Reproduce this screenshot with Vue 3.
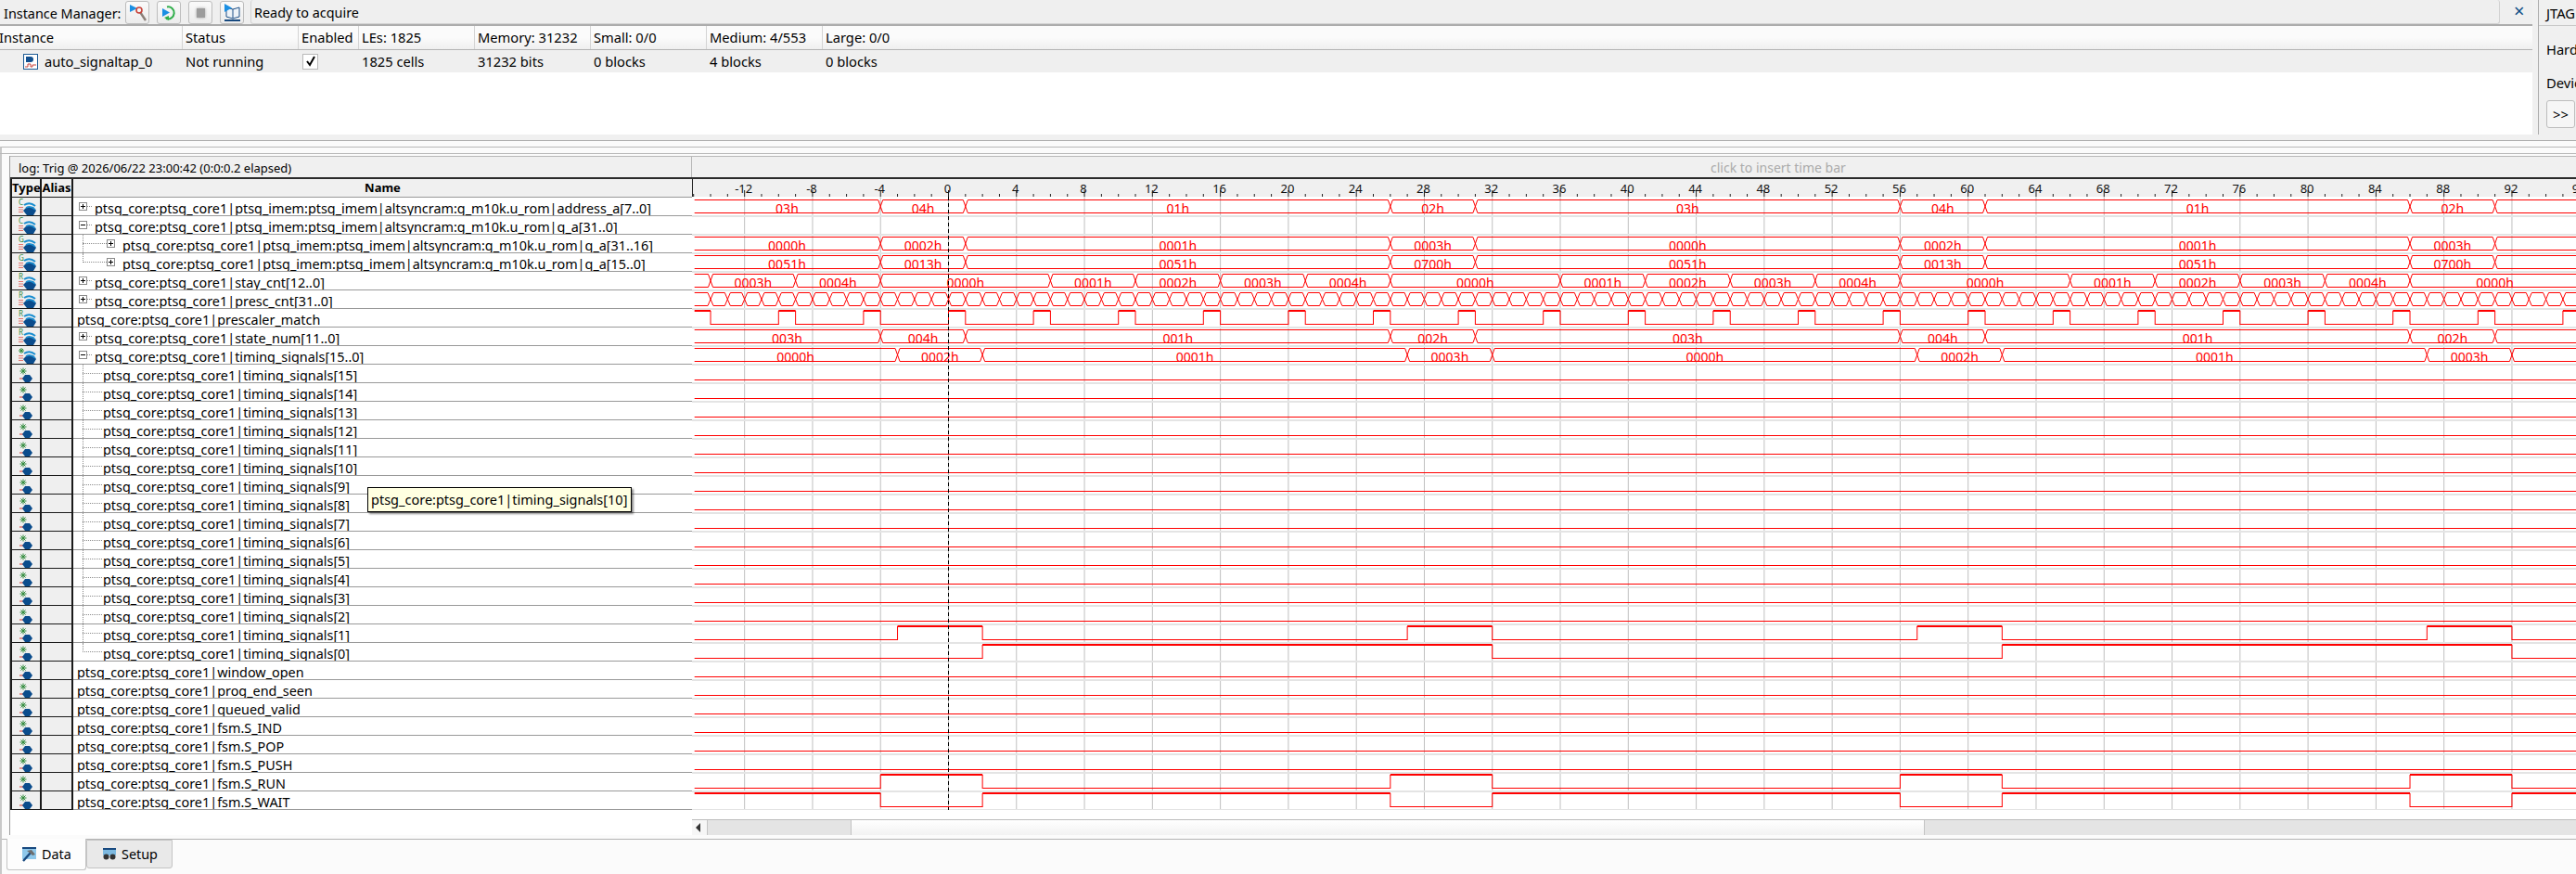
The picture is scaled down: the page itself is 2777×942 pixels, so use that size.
<script setup>
import { computed } from 'vue';

// time axis: 18.32px per unit, t=0 sits at x=276.5 inside the wave svg
const UNIT = 18.32;
const X = t => 276.5 + UNIT * t;
const rowTop = i => 19 + 20 * i;
const T0 = -15;

const P = 'ptsg_core:ptsg_core1|';
const ROM = P + 'ptsg_imem:ptsg_imem|altsyncram:g_m10k.u_rom|';

const busEdges = [-4, 1, 26, 31, 56, 61, 86, 91];
const shiftEdges = [-3, 2, 27, 32, 57, 62, 87, 92];
const stayEdges = [-14, -9, -4, 6, 11, 16, 21, 26, 36, 41, 46, 51, 56, 66, 71, 76, 81, 86, 96];
const stayLabels = ['', '0003h', '0004h', '0000h', '0001h', '0002h', '0003h', '0004h', '0000h', '0001h', '0002h', '0003h', '0004h', '0000h', '0001h', '0002h', '0003h', '0004h', '0000h', ''];

const range = (from, to, step) => {
    const out = [];
    for (let t = from; t <= to; t += step) out.push(t);
    return out;
};
const pulses = range(-15, 110, 5).flatMap(t => [t, t + 1]);

const bus = (edges, labels, cross = 2.5) => ({ kind: 'bus', edges, labels, cross });
const lvl = (init, edges = []) => ({ kind: 'lvl', init, edges });

const signals = [
    { name: ROM + 'address_a[7..0]', cls: 'n-exp', box: '+', icon: 'bus', mark: 'C', wave: bus(busEdges, ['03h', '04h', '01h', '02h', '03h', '04h', '01h', '02h', '03h']) },
    { name: ROM + 'q_a[31..0]', cls: 'n-exp', box: '-', icon: 'bus', mark: 'C' },
    { name: ROM + 'q_a[31..16]', cls: 'n-sub', box: '+', icon: 'bus', mark: 'G', wave: bus(busEdges, ['0000h', '0002h', '0001h', '0003h', '0000h', '0002h', '0001h', '0003h', '0000h']) },
    { name: ROM + 'q_a[15..0]', cls: 'n-sub', box: '+', icon: 'bus', mark: 'G', last: true, wave: bus(busEdges, ['0051h', '0013h', '0051h', '0700h', '0051h', '0013h', '0051h', '0700h', '0051h']) },
    { name: P + 'stay_cnt[12..0]', cls: 'n-exp', box: '+', icon: 'bus', mark: 'R', wave: bus(stayEdges, stayLabels) },
    { name: P + 'presc_cnt[31..0]', cls: 'n-exp', box: '+', icon: 'bus', mark: 'R', wave: bus(range(-14, 112, 1), [], 3) },
    { name: P + 'prescaler_match', cls: 'n-top', icon: 'bus', mark: 'R', wave: lvl(1, pulses.slice(1)) },
    { name: P + 'state_num[11..0]', cls: 'n-exp', box: '+', icon: 'bus', mark: 'R', wave: bus(busEdges, ['003h', '004h', '001h', '002h', '003h', '004h', '001h', '002h', '003h']) },
    { name: P + 'timing_signals[15..0]', cls: 'n-exp', box: '-', icon: 'bus', mark: '*', wave: bus(shiftEdges, ['0000h', '0002h', '0001h', '0003h', '0000h', '0002h', '0001h', '0003h', '0000h']) },
    ...range(2, 15, 1).reverse().map(n => ({ name: P + `timing_signals[${n}]`, cls: 'n-leaf', icon: 'leaf', wave: lvl(0) })),
    { name: P + 'timing_signals[1]', cls: 'n-leaf', icon: 'leaf', wave: lvl(0, [-3, 2, 27, 32, 57, 62, 87, 92]) },
    { name: P + 'timing_signals[0]', cls: 'n-leaf', icon: 'leaf', last: true, wave: lvl(0, [2, 32, 62, 92]) },
    { name: P + 'window_open', cls: 'n-top', icon: 'leaf', wave: lvl(0) },
    { name: P + 'prog_end_seen', cls: 'n-top', icon: 'leaf', wave: lvl(0) },
    { name: P + 'queued_valid', cls: 'n-top', icon: 'leaf', wave: lvl(0) },
    { name: P + 'fsm.S_IND', cls: 'n-top', icon: 'leaf', wave: lvl(0) },
    { name: P + 'fsm.S_POP', cls: 'n-top', icon: 'leaf', wave: lvl(0) },
    { name: P + 'fsm.S_PUSH', cls: 'n-top', icon: 'leaf', wave: lvl(0) },
    { name: P + 'fsm.S_RUN', cls: 'n-top', icon: 'leaf', wave: lvl(0, [-4, 2, 26, 32, 56, 62, 86, 92]) },
    { name: P + 'fsm.S_WAIT', cls: 'n-top', icon: 'leaf', wave: lvl(1, [-4, 2, 26, 32, 56, 62, 86, 92]) },
];

// the guide line on sub rows runs from the parent box down to the last child
const inTree = s => s.cls === 'n-sub' || s.cls === 'n-leaf';

const majors = range(-12, 96, 4);
const minors = range(-15, 96, 1).filter(t => (t + 12) % 4 !== 0);

const busPath = (wave, top) => {
    const hi = top + 3.5;
    const lo = top + 17.5;
    const d = wave.cross;
    const pts = [T0, ...wave.edges, 116];
    let out = '';
    for (let i = 0; i < pts.length - 1; i++) {
        const a = X(pts[i]) + (i === 0 ? 1 : d);
        const b = X(pts[i + 1]) - d;
        out += `M${a} ${hi}H${b}M${a} ${lo}H${b}`;
        if (i < pts.length - 2) out += `M${b} ${hi}L${b + 2 * d} ${lo}M${b} ${lo}L${b + 2 * d} ${hi}`;
    }
    return out;
};

const busLabels = (wave, top) => {
    const pts = [T0, ...wave.edges, 116];
    return wave.labels
        .map((text, i) => ({ text, x: (X(pts[i]) + X(pts[i + 1])) / 2, y: top + 18 }))
        .filter(l => l.text);
};

// low level and the edges are 1px, the high level is drawn 2px
const levelPaths = (wave, top) => {
    const pts = [T0, ...wave.edges, 116];
    let level = wave.init;
    let thin = '';
    let thick = '';
    for (let i = 0; i < pts.length - 1; i++) {
        const a = X(pts[i]) + (i === 0 ? 1 : 0);
        const b = X(pts[i + 1]);
        if (level) thick += `M${a} ${top + 3}H${b}`;
        else thin += `M${a} ${top + 17.5}H${b}`;
        if (i < pts.length - 2) thin += `M${b} ${top + 3}V${top + 18}`;
        level = level ? 0 : 1;
    }
    return { thin, thick };
};

const waves = computed(() =>
    signals.map((s, i) => {
        const top = rowTop(i);
        if (!s.wave) return { top };
        if (s.wave.kind === 'bus') return { top, d: busPath(s.wave, top), labels: busLabels(s.wave, top) };
        return { top, ...levelPaths(s.wave, top) };
    })
);

const columns = [
    { head: 'Instance', cell: 'auto_signaltap_0', cls: 'c-inst' },
    { head: 'Status', cell: 'Not running', cls: 'c-wide' },
    { head: 'Enabled', check: true, cls: 'c-en' },
    { head: 'LEs: 1825', cell: '1825 cells', cls: 'c-wide' },
    { head: 'Memory: 31232', cell: '31232 bits', cls: 'c-wide' },
    { head: 'Small: 0/0', cell: '0 blocks', cls: 'c-wide' },
    { head: 'Medium: 4/553', cell: '4 blocks', cls: 'c-wide' },
    { head: 'Large: 0/0', cell: '0 blocks', cls: 'c-rest' },
];
</script>

<template>
    <div class="page">
        <div class="top">
            <div class="manager">
                <div class="toolbar">
                    <span class="tb-label">Instance Manager:</span>
                    <button class="tb-btn">
                        <svg width="24" height="23" viewBox="0 0 24 23">
                            <path d="M4 3v8l8-4z" fill="#1a8fe3" />
                            <path d="M15 11l6 9" stroke="#8a7f78" stroke-width="2.4" />
                            <circle cx="14" cy="9" r="3" fill="none" stroke="#c8423a" stroke-width="1.6" />
                        </svg>
                    </button>
                    <button class="tb-btn">
                        <svg width="24" height="23" viewBox="0 0 24 23">
                            <path d="M10 5.5A6.5 6.5 0 1 1 9 18" fill="none" stroke="#2fae4a" stroke-width="2" />
                            <path d="M7 17l5-2v5z" fill="#2fae4a" />
                            <path d="M5 7v9l8-4.5z" fill="#1a8fe3" />
                        </svg>
                    </button>
                    <button class="tb-btn"><span class="stop"></span></button>
                    <button class="tb-btn">
                        <svg width="24" height="23" viewBox="0 0 24 23">
                            <path d="M6 6l7 2 7-2v10l-7 2-7-2z" fill="#eef3f8" stroke="#1c4f86" />
                            <path d="M13 8v10" stroke="#1c4f86" />
                            <path d="M4 2v9l8-4.5z" fill="#1a8fe3" />
                            <path d="M4 20h17" stroke="#17497f" stroke-width="2" />
                        </svg>
                    </button>
                    <div class="tb-status">Ready to acquire</div>
                    <span class="tb-close">×</span>
                </div>
                <div class="inst-table">
                    <div class="inst-head">
                        <div v-for="c in columns" :key="c.head" class="inst-col" :class="c.cls">{{ c.head }}</div>
                    </div>
                    <div class="inst-row">
                        <div v-for="c in columns" :key="c.head" class="inst-col" :class="c.cls">
                            <svg v-if="c.cls === 'c-inst'" class="inst-icon" width="16" height="17" viewBox="0 0 16 17">
                                <rect x="0.5" y="0.5" width="15" height="16" fill="#fff" stroke="#1c5a94" />
                                <path d="M3 3h5a3 3 0 0 1 0 6H3z" fill="#12508f" />
                                <path d="M2 14h3v-3h3v3h2v-2h4" fill="none" stroke="#c8423a" />
                            </svg>
                            <span v-if="c.check" class="check">
                                <svg width="12" height="12" viewBox="0 0 12 12"><path d="M2 6l3 4 5-9" fill="none" stroke="#000" stroke-width="2" /></svg>
                            </span>
                            {{ c.cell }}
                        </div>
                    </div>
                </div>
            </div>
            <div class="gutter"></div>
            <div class="jtag">
                <div class="jtag-title">JTAG Chain Configuration</div>
                <div class="jtag-line">Hardware:</div>
                <div class="jtag-line">Device:</div>
                <button class="more">&gt;&gt;</button>
            </div>
        </div>

        <div class="split"></div>

        <div class="data-wrap">
            <div class="strip"></div>
            <div class="panel">
                <div class="log-bar">
                    <div class="log-text">log: Trig @ 2026/06/22 23:00:42 (0:0:0.2 elapsed)</div>
                    <div class="time-bar">click to insert time bar</div>
                </div>
                <div class="wave-body">
                    <div class="sig-table">
                        <div class="sig-head">
                            <div class="h-type">Type</div>
                            <div class="h-alias">Alias</div>
                            <div class="h-name">Name</div>
                        </div>
                        <div v-for="s in signals" :key="s.name" class="sig-row">
                            <div class="cell-type">
                                <svg v-if="s.icon === 'bus'" width="32" height="19" viewBox="0 0 32 19">
                                    <text v-if="s.mark !== '*'" x="9" y="8" class="mark">{{ s.mark }}</text>
                                    <path v-else d="M12 2v6M9 5h6M10 3l4 4M14 3l-4 4" stroke="#2f8a3a" fill="none" />
                                    <path d="M9 10.5h5M9 13h5M9 15.5h5" stroke="#e0564c" stroke-width="0.8" />
                                    <path d="M14 14l4-4h7l3 4-3 5h-7z" fill="#0b4c8c" />
                                    <path d="M15 8q6-4 12 1" stroke="#1b8ed0" stroke-width="2" fill="none" />
                                    <path d="M17 11q5-3 10 2" stroke="#1b8ed0" stroke-width="1.5" fill="none" />
                                </svg>
                                <svg v-else width="32" height="19" viewBox="0 0 32 19">
                                    <path d="M14 3.5v7M10.5 7h7M11.5 4.5l5 5M16.5 4.5l-5 5" stroke="#2f8a3a" fill="none" />
                                    <path d="M10 15h4" stroke="#d8342a" />
                                    <path d="M13 15l3-4h5l3 4-3 4h-5z" fill="#0b4c8c" />
                                </svg>
                            </div>
                            <div class="cell-alias"></div>
                            <div class="cell-name" :class="s.cls">
                                <span v-if="inTree(s)" class="guide-v" :class="{ half: s.last }"></span>
                                <span v-if="inTree(s)" class="guide-h"></span>
                                <span v-if="s.cls === 'n-exp'" class="guide-stub"></span>
                                <span v-if="s.box" class="box">
                                    <svg width="9" height="9" viewBox="0 0 9 9">
                                        <rect x="0.5" y="0.5" width="8" height="8" fill="#fff" stroke="#8a8a8a" />
                                        <path d="M2 4.5h5" stroke="#000" />
                                        <path v-if="s.box === '+'" d="M4.5 2v5" stroke="#000" />
                                    </svg>
                                </span>
                                <span class="name-text">{{ s.name }}</span>
                            </div>
                        </div>
                    </div>

                    <svg class="wave" width="2031" height="680" viewBox="0 0 2031 680">
                        <rect x="0" y="0" width="2031" height="19" fill="#f0f0f0" />
                        <rect x="0" y="19" width="2031" height="661" fill="#fff" />
                        <rect x="0" y="0" width="1" height="19" fill="#222" />
                        <path v-for="t in majors" :key="'g' + t" :d="`M${X(t)} 19V680`" stroke="#c0c0c0" />
                        <rect v-for="(w, i) in waves" :key="'s' + i" x="0" :y="w.top + 20" width="2031" height="2" fill="#e4e4e4" />
                        <path v-for="t in minors" :key="'m' + t" :d="`M${X(t)} 16V19`" stroke="#222" />
                        <path v-for="t in majors" :key="'j' + t" :d="`M${X(t)} 12V19`" stroke="#222" />
                        <text v-for="t in majors" :key="'l' + t" :x="X(t) - 1" y="15" text-anchor="middle" class="tick">{{ t }}</text>
                        <g v-for="(w, i) in waves" :key="'w' + i">
                            <path v-if="w.d" :d="w.d" class="sig" />
                            <path v-if="w.thin" :d="w.thin" class="sig" />
                            <path v-if="w.thick" :d="w.thick" class="sig-high" />
                            <text v-for="l in w.labels" :key="l.x" :x="l.x" :y="l.y" text-anchor="middle" class="val">{{ l.text }}</text>
                        </g>
                        <path :d="`M${X(0)} 19V680`" stroke="#000" stroke-dasharray="4 3" />
                    </svg>
                </div>
                <div class="scroll-row">
                    <div class="scrollbar">
                        <div class="sb-arrow"></div>
                        <div class="sb-groove g1"></div>
                        <div class="sb-thumb"></div>
                        <div class="sb-groove g2"></div>
                    </div>
                </div>
            </div>
            <div class="tabs">
                <div class="tab tab-on">
                    <svg width="17" height="16" viewBox="0 0 17 16">
                        <rect x="1" y="0" width="15" height="13" fill="#8fc8ea" />
                        <rect x="1" y="0" width="15" height="2" fill="#17497f" />
                        <path d="M2 15l8-9" stroke="#17497f" stroke-width="2.4" />
                        <path d="M6 4l5-1 4 5-3 1-2-2z" fill="#6e6e6e" />
                    </svg>
                    Data
                </div>
                <div class="tab tab-off">
                    <svg width="16" height="14" viewBox="0 0 16 14">
                        <rect x="1" y="0" width="14" height="8" fill="#7db9e0" />
                        <rect x="1" y="0" width="14" height="2" fill="#17497f" />
                        <circle cx="4.5" cy="9.5" r="3" fill="#333" />
                        <circle cx="11.5" cy="9.5" r="3" fill="#333" />
                    </svg>
                    Setup
                </div>
            </div>
        </div>

        <div class="tooltip">ptsg_core:ptsg_core1|timing_signals[10]</div>
    </div>
</template>

<style>
html,
body {
    margin: 0;
    background: #fbfbfb;
}
</style>

<style scoped>
.page {
    position: relative;
    width: 2777px;
    height: 942px;
    overflow: hidden;
    background: #fbfbfb;
    color: #000;
    font-family: "Noto Sans", sans-serif;
    font-size: 14.4px;
}

.top {
    display: flex;
    height: 145px;
    background: #f0f0f0;
}

.manager {
    width: 2730px;
    background: #fff;
}

.toolbar {
    display: flex;
    align-items: flex-start;
    height: 28px;
    box-sizing: border-box;
    padding: 1px 0 0 4px;
    background: #efefef;
    border-bottom: 2px solid #acacac;
}

.tb-label {
    width: 131px;
    line-height: 27px;
    height: 27px;
}

.tb-btn {
    display: flex;
    align-items: center;
    justify-content: center;
    width: 26px;
    height: 25px;
    margin-right: 8px;
    padding: 0;
    box-sizing: border-box;
    background: linear-gradient(#fafafa, #ececec);
    border: 1px solid #bdbdbd;
    border-radius: 3px;
}

.stop {
    width: 9px;
    height: 10px;
    background: #9c9c9c;
    box-shadow: 0 0 3px #9c9c9c;
}

.tb-status {
    width: 2425px;
    margin-top: -1px;
    margin-left: -1px;
    height: 26px;
    box-sizing: border-box;
    padding-left: 3px;
    line-height: 27px;
    border: 1px solid #d2d2d2;
    border-top: none;
    border-radius: 3px;
}

.tb-close {
    margin-left: 15px;
    margin-top: -3px;
    font-size: 20px;
    line-height: 27px;
    color: #0c4d86;
}

.inst-table {
    font-size: 14.7px;
}

.inst-head {
    display: flex;
    height: 26px;
    box-sizing: border-box;
    background: linear-gradient(#fbfbfb 50%, #efefef);
    border-bottom: 1px solid #b4b4b4;
}

.inst-head .inst-col {
    line-height: 25px;
    padding-left: 3px;
    box-sizing: border-box;
    border-right: 1px solid #d4d4d4;
}

.inst-head .c-rest {
    border-right: none;
}

.inst-head .c-inst {
    padding-left: 0;
    text-indent: -1px;
}

.inst-row {
    display: flex;
    height: 24px;
    background: #efefef;
}

.inst-row .inst-col {
    display: flex;
    align-items: center;
    gap: 7px;
    box-sizing: border-box;
    padding-left: 3px;
}

.inst-row .c-inst {
    padding-left: 25px;
}

.c-inst {
    width: 197px;
}

.c-wide {
    width: 125px;
}

.c-en {
    width: 65px;
}

.c-rest {
    flex: 1;
}

.check {
    display: flex;
    align-items: center;
    justify-content: center;
    width: 15px;
    height: 15px;
    background: #fff;
    border: 1px solid #b9b9b9;
    margin-left: 1px;
}

.gutter {
    width: 6px;
    border-right: 1px solid #acacac;
}

.jtag {
    flex: 1;
    min-width: 0;
    padding-left: 8px;
    font-size: 14.7px;
    white-space: nowrap;
    overflow: hidden;
}

.jtag-title {
    height: 28px;
    line-height: 29px;
    margin-left: -8px;
    padding-left: 8px;
    box-sizing: border-box;
    border-bottom: 1px solid #c8c8c8;
}

.jtag-line {
    height: 36px;
    line-height: 50px;
}

.more {
    display: block;
    width: 31px;
    height: 30px;
    margin-top: 8px;
    padding: 0;
    font: inherit;
    background: #f6f6f6;
    border: 1px solid #bdbdbd;
    border-radius: 3px;
}

.split {
    height: 6px;
    background: #f0f0f0;
    border-bottom: 1px solid #acacac;
}

.data-wrap {
    height: 784px;
    margin-top: 6px;
    box-sizing: border-box;
    border-left: 2px solid #c8c8c8;
    border-top: 1px solid #b8b8b8;
    padding-top: 6px;
    background: #fbfbfb;
}

.strip {
    height: 3px;
    margin-left: -2px;
    border-top: 1px solid #b8b8b8;
    box-sizing: border-box;
}

.panel {
    margin-left: 8px;
    height: 732px;
    background: #fff;
    border-left: 1px solid #9c9c9c;
}

.log-bar {
    display: flex;
    height: 25px;
    box-sizing: border-box;
    background: #f0f0f0;
    border-top: 1px solid #b8b8b8;
    border-bottom: 2px solid #2b2b2b;
}

.log-text {
    width: 735px;
    box-sizing: border-box;
    padding-left: 9px;
    padding-top: 2px;
    font-size: 13px;
    line-height: 20px;
    border-right: 1px solid #b8b8b8;
}

.time-bar {
    flex: 1;
    padding-left: 1098px;
    font-size: 14px;
    color: #ababab;
    line-height: 24px;
}

.wave-body {
    display: flex;
    height: 680px;
}

.wave {
    display: block;
    flex: none;
}

.sig-table {
    width: 735px;
    flex: none;
}

.sig-head {
    display: grid;
    grid-template-columns: 34px 34px 667px;
    height: 20px;
    box-sizing: border-box;
    background: #f0f0f0;
    font-weight: 700;
    font-size: 13px;
    line-height: 19px;
    text-align: center;
    border-bottom: 1px solid #999;
}

.h-type,
.h-alias {
    border-right: 2px solid #1a1a1a;
    border-bottom: 1px solid #1a1a1a;
    margin-bottom: -1px;
    white-space: nowrap;
    overflow: hidden;
}

.h-type {
    border-left: 2px solid #1a1a1a;
    text-align: left;
    padding-left: 0;
}

.sig-row {
    display: grid;
    grid-template-columns: 34px 34px 667px;
    height: 20px;
}

.cell-type,
.cell-alias {
    box-sizing: border-box;
    background: #efefef;
    border-right: 2px solid #1a1a1a;
    border-bottom: 1px solid #1a1a1a;
    overflow: hidden;
}

.cell-type {
    border-left: 2px solid #1a1a1a;
}

.cell-type svg {
    display: block;
    margin-left: -2px;
}

.mark {
    font-size: 8px;
    fill: #2f8a3a;
}

.cell-name {
    position: relative;
    box-sizing: border-box;
    border-bottom: 1px solid #999;
    background: #fff;
    white-space: nowrap;
    overflow: hidden;
}

.name-text {
    display: block;
    height: 19px;
    padding-top: 2px;
    box-sizing: border-box;
    line-height: 19px;
    overflow: hidden;
}

.n-top {
    padding-left: 4px;
}

.n-exp {
    padding-left: 23px;
}

.n-sub {
    padding-left: 53px;
}

.n-leaf {
    padding-left: 32px;
}

.box {
    position: absolute;
    top: 5px;
    left: 6px;
    display: block;
    height: 9px;
}

.box svg {
    display: block;
}

.n-sub .box {
    left: 36px;
}

.guide-stub,
.guide-h {
    position: absolute;
    top: 9px;
    height: 0;
    border-top: 1px dotted #8c8c8c;
}

.guide-stub {
    left: 15px;
    width: 5px;
}

.guide-h {
    left: 10px;
    width: 21px;
}

.n-sub .guide-h {
    width: 26px;
}

.guide-v {
    position: absolute;
    left: 10px;
    top: 0;
    bottom: 0;
    border-left: 1px dotted #8c8c8c;
}

.guide-v.half {
    bottom: auto;
    height: 10px;
}

.tick {
    font-size: 13px;
    fill: #111;
}

.val {
    font-size: 14px;
    fill: #f00;
}

.sig {
    fill: none;
    stroke: #f00;
    stroke-width: 1;
}

.sig-high {
    fill: none;
    stroke: #f00;
    stroke-width: 2;
}

.scroll-row {
    display: flex;
    justify-content: flex-end;
    padding-top: 10px;
}

.scrollbar {
    display: flex;
    width: 2031px;
    height: 17px;
    background: #e4e4e4;
    border-top: 1px solid #bcbcbc;
    box-sizing: border-box;
}

.sb-arrow {
    width: 17px;
    box-sizing: border-box;
    background: #f6f6f6;
    border-right: 1px solid #c4c4c4;
    position: relative;
}

.sb-arrow::before {
    content: "";
    position: absolute;
    left: 4px;
    top: 3px;
    border: 5px solid transparent;
    border-left: 0;
    border-right: 5px solid #333;
}

.g1 {
    width: 154px;
}

.sb-thumb {
    width: 1158px;
    box-sizing: border-box;
    background: linear-gradient(#fff, #f2f2f2);
    border-left: 1px solid #c4c4c4;
    border-right: 1px solid #c4c4c4;
}

.g2 {
    flex: 1;
}

.tabs {
    position: relative;
    display: flex;
    height: 34px;
    margin-top: 4px;
    padding-left: 5px;
    border-top: 1px solid #b4b4b4;
}

.tab {
    display: flex;
    align-items: center;
    box-sizing: border-box;
    gap: 5px;
    border: 1px solid #c4c4c4;
    border-radius: 0 0 3px 3px;
}

.tab-on {
    width: 86px;
    height: 34px;
    margin-top: -1px;
    padding-left: 15px;
    background: #fdfdfd;
    border-top: none;
}

.tab-off {
    width: 93px;
    height: 31px;
    padding-left: 16px;
    background: #e9e9e9;
}

.tooltip {
    position: absolute;
    left: 396px;
    top: 525px;
    width: 285px;
    height: 27px;
    box-sizing: border-box;
    padding-left: 3px;
    font-size: 14.5px;
    line-height: 25px;
    white-space: nowrap;
    background: #ffffe1;
    border: 1px solid #000;
    box-shadow: 2px 2px 2px rgba(0, 0, 0, 0.45);
}
</style>
